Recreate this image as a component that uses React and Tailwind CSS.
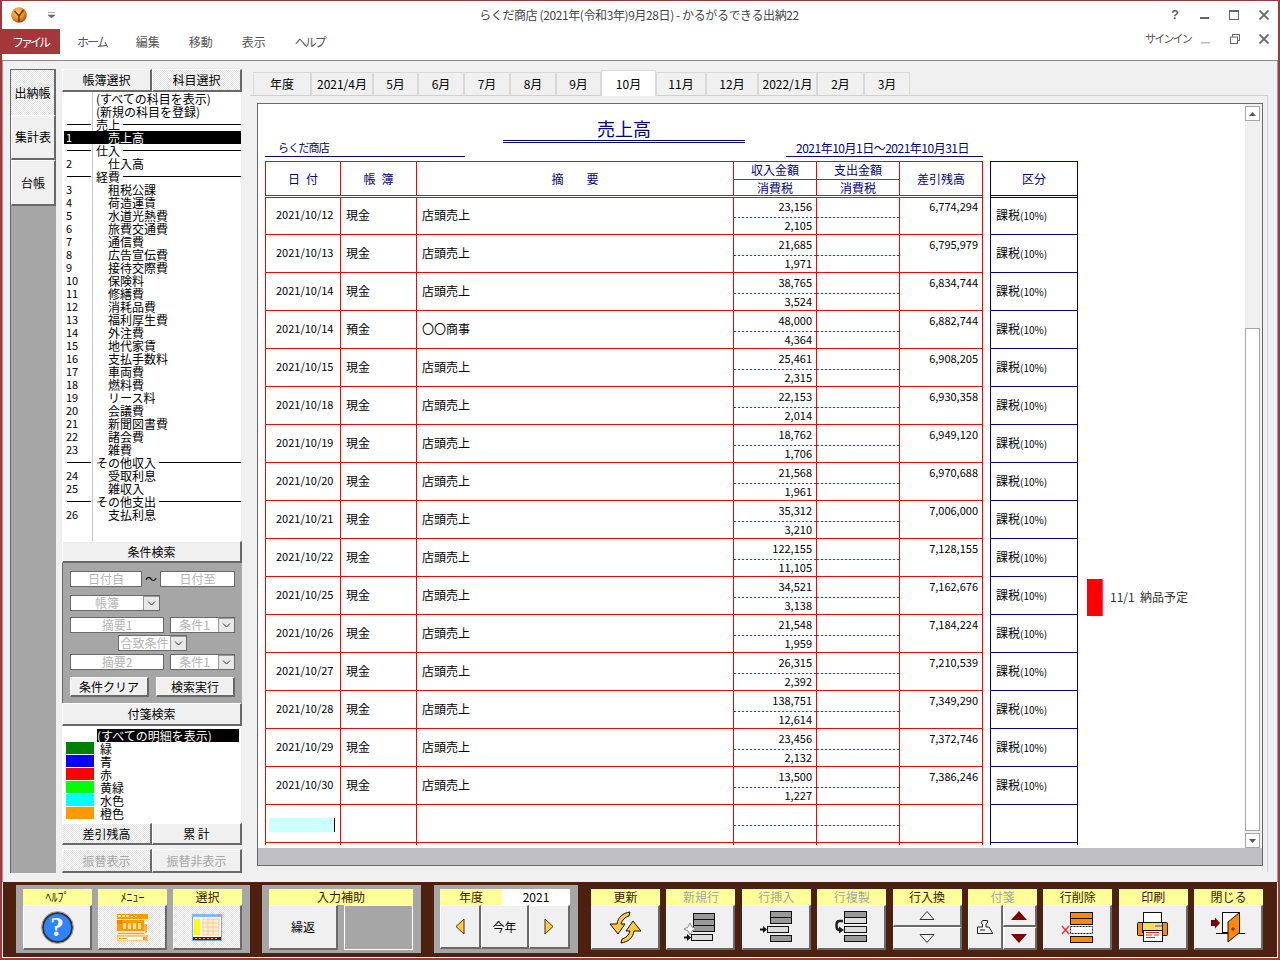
import React from "react";

const bevel =
  "border-t border-l border-t-white border-l-white border-r-2 border-b-2 border-r-[#696969] border-b-[#696969]";
const dither =
  "bg-[image:repeating-conic-gradient(#e2e2e2_0_25%,#ffffff_0_50%)] bg-[length:2px_2px]";

const accounts = [
  { name: "(すべての科目を表示)" },
  { name: "(新規の科目を登録)" },
  { head: "売上" },
  { no: 1, name: "売上高", selected: true },
  { head: "仕入" },
  { no: 2, name: "仕入高" },
  { head: "経費" },
  { no: 3, name: "租税公課" },
  { no: 4, name: "荷造運賃" },
  { no: 5, name: "水道光熱費" },
  { no: 6, name: "旅費交通費" },
  { no: 7, name: "通信費" },
  { no: 8, name: "広告宣伝費" },
  { no: 9, name: "接待交際費" },
  { no: 10, name: "保険料" },
  { no: 11, name: "修繕費" },
  { no: 12, name: "消耗品費" },
  { no: 13, name: "福利厚生費" },
  { no: 14, name: "外注費" },
  { no: 15, name: "地代家賃" },
  { no: 16, name: "支払手数料" },
  { no: 17, name: "車両費" },
  { no: 18, name: "燃料費" },
  { no: 19, name: "リース料" },
  { no: 20, name: "会議費" },
  { no: 21, name: "新聞図書費" },
  { no: 22, name: "諸会費" },
  { no: 23, name: "雑費" },
  { head: "その他収入" },
  { no: 24, name: "受取利息" },
  { no: 25, name: "雑収入" },
  { head: "その他支出" },
  { no: 26, name: "支払利息" },
];

const tags = [
  { name: "緑", color: "bg-[#008000]" },
  { name: "青", color: "bg-[#0000ff]" },
  { name: "赤", color: "bg-[#ff0000]" },
  { name: "黄緑", color: "bg-[#00ff00]" },
  { name: "水色", color: "bg-[#00ffff]" },
  { name: "橙色", color: "bg-[#ff9900]" },
];

const months = [
  { label: "年度", w: "w-[58px]" },
  { label: "2021/4月", w: "w-[62px]" },
  { label: "5月", w: "w-[45px]" },
  { label: "6月", w: "w-[46px]" },
  { label: "7月", w: "w-[46px]" },
  { label: "8月", w: "w-[46px]" },
  { label: "9月", w: "w-[45px]" },
  { label: "10月", w: "w-[55px]", active: true },
  { label: "11月", w: "w-[50px]" },
  { label: "12月", w: "w-[52px]" },
  { label: "2022/1月", w: "w-[59px]" },
  { label: "2月", w: "w-[47px]" },
  { label: "3月", w: "w-[46px]" },
];

const rows = [
  ["2021/10/12", "現金", "店頭売上", "23,156", "2,105", "6,774,294"],
  ["2021/10/13", "現金", "店頭売上", "21,685", "1,971", "6,795,979"],
  ["2021/10/14", "現金", "店頭売上", "38,765", "3,524", "6,834,744"],
  ["2021/10/14", "預金", "〇〇商事", "48,000", "4,364", "6,882,744"],
  ["2021/10/15", "現金", "店頭売上", "25,461", "2,315", "6,908,205"],
  ["2021/10/18", "現金", "店頭売上", "22,153", "2,014", "6,930,358"],
  ["2021/10/19", "現金", "店頭売上", "18,762", "1,706", "6,949,120"],
  ["2021/10/20", "現金", "店頭売上", "21,568", "1,961", "6,970,688"],
  ["2021/10/21", "現金", "店頭売上", "35,312", "3,210", "7,006,000"],
  ["2021/10/22", "現金", "店頭売上", "122,155", "11,105", "7,128,155"],
  ["2021/10/25", "現金", "店頭売上", "34,521", "3,138", "7,162,676", "11/1  納品予定"],
  ["2021/10/26", "現金", "店頭売上", "21,548", "1,959", "7,184,224"],
  ["2021/10/27", "現金", "店頭売上", "26,315", "2,392", "7,210,539"],
  ["2021/10/28", "現金", "店頭売上", "138,751", "12,614", "7,349,290"],
  ["2021/10/29", "現金", "店頭売上", "23,456", "2,132", "7,372,746"],
  ["2021/10/30", "現金", "店頭売上", "13,500", "1,227", "7,386,246"],
];

const Logo = () => (
  <svg width="18" height="18" viewBox="0 0 18 18">
    <defs>
      <radialGradient id="ball" cx="40%" cy="35%" r="70%">
        <stop offset="0%" stopColor="#ffd27a" />
        <stop offset="60%" stopColor="#f08a1c" />
        <stop offset="100%" stopColor="#8a4a12" />
      </radialGradient>
    </defs>
    <circle cx="9" cy="9" r="7.8" fill="url(#ball)" />
    <path d="M4.500 5 9 10l4.500-6M9 10v6" fill="none" stroke="#6b3a10" strokeWidth="1.600" />
  </svg>
);

const HelpIcon = () => (
  <div className="w-[31px] h-[31px] rounded-full bg-[#2f83ff] border-2 border-[#333333] outline outline-1 outline-[#999999] flex items-center justify-center text-white text-[27px] font-bold font-['Liberation_Serif',serif] leading-none">
    ?
  </div>
);

const MenuIcon = () => (
  <svg width="31" height="27" viewBox="0 0 31 27">
    <rect x="0" y="0" width="31" height="5" fill="#ff9a00" />
    <rect x="1" y="1" width="3" height="2" fill="#ffe9a0" />
    <rect x="5" y="1" width="3" height="2" fill="#ffe9a0" />
    <rect x="9" y="1" width="3" height="2" fill="#ffe9a0" />
    <rect x="14" y="2" width="2" height="1" fill="#fff" />
    <rect x="18" y="2" width="2" height="1" fill="#fff" />
    <rect x="0" y="6" width="27" height="11" fill="#ff9a00" />
    <rect x="0" y="6" width="5" height="4" fill="#ff7a00" />
    <rect x="6" y="9" width="3" height="6" fill="#ffe0a0" />
    <rect x="11" y="9" width="3" height="6" fill="#ffe0a0" />
    <rect x="16" y="9" width="3" height="6" fill="#ffe0a0" />
    <rect x="21" y="9" width="3" height="6" fill="#ffe0a0" />
    <rect x="27" y="10" width="3" height="9" fill="#ffb040" />
    <rect x="0" y="17" width="28" height="5" fill="#ffe6c0" />
    <rect x="1" y="19" width="26" height="1" fill="#ff9a00" />
    <rect x="0" y="22" width="31" height="5" fill="#ffffff" stroke="#ff9a00" />
    <rect x="2" y="24" width="8" height="1" fill="#ff9a00" />
    <rect x="26" y="23" width="4" height="3" fill="#ffa020" />
  </svg>
);

const SelectIcon = () => (
  <svg width="30" height="27" viewBox="0 0 30 27">
    <rect x="0.500" y="0.500" width="29" height="26" fill="#ffffff" stroke="#6aaef5" />
    <rect x="0" y="0" width="30" height="3" fill="#7dbbff" />
    <rect x="26" y="0" width="4" height="2" fill="#ff80a0" />
    <rect x="2" y="5" width="6" height="16" fill="#ffff00" stroke="#ffcc80" strokeWidth="0.500" />
    <rect x="11" y="5" width="16" height="16" fill="#fff0d8" stroke="#ffc890" />
    <path d="M11 9h16M11 13h16M11 17h16M16 5v16M21 5v16" stroke="#ffc890" fill="none" />
    <rect x="1" y="23" width="28" height="3" fill="#8a0000" />
    <path d="M3 24.500h2M7 24.500h2M11 24.500h2M15 24.500h2M19 24.500h2M23 24.500h2" stroke="#ffd040" />
  </svg>
);

const SyncIcon = () => {
  const arrow = "M21 1C14 2 9 6 8 13H1l8 10 7-10h-4c1-4 4-7 8-8z";
  return (
    <svg width="33" height="33" viewBox="0 0 33 33">
      <path d={arrow} fill="#ffc938" stroke="#111" />
      <path d={arrow} fill="#ffc938" stroke="#111" transform="rotate(180 16.500 16.500)" />
    </svg>
  );
};

const Side = ({ dir }) => (
  <svg width="10" height="17" viewBox="0 0 10 17">
    <path d={dir === "left" ? "M9 1v15L1 8.500z" : "M1 1v15l8-7.500z"} fill="#ffcc33" stroke="#333" />
  </svg>
);

const arrowRight = "M0 3h3V0.500L7 4 3 7.500V5H0z";

const NewRowIcon = () => (
  <svg width="32" height="29" viewBox="0 0 32 29">
    <rect x="9.500" y="0.500" width="21" height="6" fill="#999" stroke="#111" />
    <rect x="9.500" y="6.500" width="21" height="6" fill="#999" stroke="#111" />
    <rect x="9.500" y="12.500" width="21" height="6" fill="#999" stroke="#111" />
    <path d="M6 10l2 4 4 2-4 2-2 4-2-4-4-2 4-2z" fill="#fff" stroke="#888" />
    <rect x="7.500" y="21.500" width="21" height="6" fill="#ddd" stroke="#111" />
    <path d={arrowRight} transform="translate(0 20.500)" fill="#111" />
  </svg>
);

const InsertIcon = () => (
  <svg width="32" height="32" viewBox="0 0 32 32">
    <rect x="10.500" y="0.500" width="21" height="6" fill="#999" stroke="#111" />
    <rect x="10.500" y="6.500" width="21" height="6" fill="#999" stroke="#111" />
    <rect x="7.500" y="15.500" width="21" height="6" fill="#ddd" stroke="#111" />
    <rect x="10.500" y="24.500" width="21" height="6" fill="#999" stroke="#111" />
    <path d={arrowRight} transform="translate(0 14.500)" fill="#111" />
  </svg>
);

const CopyIcon = () => (
  <svg width="32" height="32" viewBox="0 0 32 32">
    <rect x="9.500" y="0.500" width="22" height="6" fill="#999" stroke="#111" />
    <rect x="9.500" y="6.500" width="22" height="6" fill="#ddd" stroke="#111" />
    <rect x="9.500" y="15.500" width="22" height="6" fill="#ddd" stroke="#111" />
    <rect x="9.500" y="24.500" width="22" height="6" fill="#999" stroke="#111" />
    <path d="M8 10H4.500Q1.500 10 1.500 14v1Q1.500 19 4.500 19H5" fill="none" stroke="#222" strokeWidth="2.500" />
    <path d="M4 15.500 9 19 4 22.500z" fill="#222" />
  </svg>
);

const StampIcon = () => (
  <svg width="16" height="14" viewBox="0 0 16 14">
    <path d="M5.500 0.500h5v2.500l-1.500 1v3h3l3.500 6v0.500H0.500v-6.500h5v-3L4 3z" fill="#f5f5f5" stroke="#222" />
    <path d="M3 10h5" stroke="#222" />
  </svg>
);

const DeleteIcon = () => (
  <svg width="32" height="31" viewBox="0 0 32 31">
    <rect x="9.500" y="0.500" width="22" height="6" fill="#ff8a00" stroke="#111" />
    <rect x="9.500" y="6.500" width="22" height="6" fill="#ff8a00" stroke="#111" />
    <rect x="9.500" y="14.500" width="22" height="7" fill="#fff" stroke="#111" strokeDasharray="2 1" />
    <rect x="9.500" y="24.500" width="22" height="6" fill="#ff8a00" stroke="#111" />
    <path d="M1 14l7 8M8 14l-7 8" stroke="#ff3030" strokeWidth="1.500" />
  </svg>
);

const PrintIcon = () => (
  <svg width="32" height="30" viewBox="0 0 32 30">
    <rect x="6.500" y="0.500" width="18" height="10" fill="#fff" stroke="#111" />
    <rect x="0.500" y="10.500" width="30" height="13" rx="1" fill="#ff8a00" stroke="#111" />
    <rect x="5.500" y="10.500" width="20" height="10" fill="#ffdd55" stroke="#111" />
    <rect x="18" y="13" width="7" height="2" fill="#999" />
    <rect x="6.500" y="18.500" width="19" height="11" fill="#fff" stroke="#111" />
    <path d="M9 20.500h13M9 23h6M17 23h5M9 25.500h9" stroke="#ff2020" strokeWidth="1.200" />
  </svg>
);

const DoorIcon = () => (
  <svg width="34" height="31" viewBox="0 0 34 31">
    <path d="M0 8h4V5.500L9 11l-5 5.500V14H0z" fill="#7a0000" />
    <rect x="11.500" y="0.500" width="17" height="20" fill="#fff" stroke="#111" />
    <path d="M5 21.500h29" stroke="#111" />
    <path d="M17 10 28.500 0.500v20L17 30z" fill="#ff8a00" stroke="#111" />
    <path d="M20 17h4M22 15v4" stroke="#a00000" />
  </svg>
);

const Tri = ({ up }) => (
  <svg width="16" height="9" viewBox="0 0 16 9">
    <path d={up ? "M8 0.500 15 8.500H1z" : "M1 0.500h14L8 8.500z"} fill="#f0f0f0" stroke="#333" />
  </svg>
);

const SolidTri = ({ up }) => (
  <svg width="16" height="9" viewBox="0 0 16 9">
    <path d={up ? "M8 0 16 9H0z" : "M0 0h16L8 9z"} fill="#800000" />
  </svg>
);

const Chevron = () => (
  <svg width="9" height="5" viewBox="0 0 9 5">
    <path d="M1 0.500 4.500 4 8 0.500" fill="none" stroke="#333" />
  </svg>
);

const Label = ({ children, disabled, className = "" }) => (
  <div
    className={`h-[16px] bg-[#ffff99] flex items-center justify-center text-[12px] leading-none ${
      disabled ? "text-[#a6a6a6]" : "text-[#3a1500]"
    } ${className}`}
  >
    {children}
  </div>
);

const ToolButton = ({ label, disabled, dotted, children }) => (
  <div className="w-[69px] shrink-0">
    <Label disabled={disabled}>{label}</Label>
    <div className={`h-[45px] flex items-center justify-center ${bevel} ${dotted ? dither : "bg-[#f0f0f0]"}`}>
      {children}
    </div>
  </div>
);

const SideButton = ({ children, active, disabled, className = "" }) => (
  <div
    className={`flex items-center justify-center text-[12px] ${bevel} ${active ? dither : "bg-[#f0f0f0]"} ${
      disabled ? "text-[#a6a6a6]" : "text-black"
    } ${className}`}
  >
    {children}
  </div>
);

const Field = ({ children, className = "" }) => (
  <div
    className={`h-[16px] border border-[#696969] bg-white text-[#b4b4b4] text-[12px] leading-[14px] text-center whitespace-nowrap ${className}`}
  >
    {children}
  </div>
);

const Combo = ({ children, className = "" }) => (
  <div className={`h-[16px] flex border border-[#696969] bg-white text-[#b4b4b4] text-[12px] leading-[14px] ${className}`}>
    <span className="flex-1 text-center whitespace-nowrap">{children}</span>
    <span className="w-[16px] bg-[#e8e8e8] border-l border-t border-[#999999] flex items-center justify-center">
      <Chevron />
    </span>
  </div>
);

const AccountRow = ({ item }) => {
  if (item.head) {
    return (
      <div className="flex h-[13px] leading-[13px] items-center shrink-0">
        <div className="w-[29px] h-full border-r border-[#c8c8c8] flex items-center">
          <div className="ml-[3px] w-[24px] h-px bg-black" />
        </div>
        <span className="ml-[3px] mr-[3px] whitespace-nowrap">{item.head}</span>
        <div className="flex-1 h-px bg-black" />
      </div>
    );
  }
  return (
    <div className={`flex h-[13px] leading-[13px] shrink-0 ${item.selected ? "bg-black text-white" : ""}`}>
      <div
        className={`w-[29px] pl-[2px] text-[11px] border-r ${
          item.selected ? "border-black" : "border-[#c8c8c8]"
        }`}
      >
        {item.no}
      </div>
      <span className={`whitespace-nowrap ${item.no ? "pl-[15px]" : "pl-[3px]"}`}>{item.name}</span>
    </div>
  );
};

const Dash = () => (
  <div className="h-px shrink-0 bg-[image:repeating-linear-gradient(90deg,#ff0000_0_2px,transparent_2px_4px)]" />
);

const Row = ({ row = [], blank }) => (
  <div className="flex h-[38px] shrink-0">
    <div className="flex w-[718px] border-b border-r border-[#ff0000] text-[12px]">
      <div className={`w-[75px] border-l border-[#ff0000] pl-[10px] flex items-center text-[11px] ${blank ? "pt-[2px]" : "pb-[2px]"}`}>
        {blank ? <div className="-ml-[7px] w-[66px] h-[14px] bg-[#ccffff] border-r border-black" /> : row[0]}
      </div>
      <div className="w-[76px] border-l border-[#ff0000] pl-[5px] pb-[2px] flex items-center">{row[1]}</div>
      <div className="w-[317px] border-l border-[#ff0000] pl-[5px] pb-[2px] flex items-center">{row[2]}</div>
      <div className="w-[83px] border-l border-[#ff0000] flex flex-col text-[11px] text-right">
        <div className="h-[20px] pr-[4px] leading-[18px]">{row[3]}</div>
        <Dash />
        <div className="flex-1 pr-[4px] leading-[14px]">{row[4]}</div>
      </div>
      <div className="w-[83px] border-l border-[#ff0000] flex flex-col">
        <div className="h-[20px]" />
        <Dash />
      </div>
      <div className="flex-1 border-l border-[#ff0000] pr-[4px] text-right text-[11px] leading-[18px]">{row[5]}</div>
    </div>
    <div className="ml-[7px] w-[88px] border-x border-b border-[#000080] pl-[5px] pb-[2px] flex items-center text-[12px] whitespace-nowrap">
      {!blank && (
        <span>
          課税<span className="text-[10px]">(10%)</span>
        </span>
      )}
    </div>
    {row[6] && (
      <div className="ml-[9px] flex items-start">
        <div className="w-[16px] h-[37px] mt-[2px] bg-[#ff0000] border-r border-[#ff3399]" />
        <span className="ml-[7px] mt-[11px] text-[12px] text-[#333333] whitespace-pre">{row[6]}</span>
      </div>
    )}
  </div>
);

const App = () => {
  return (
    <div className="w-[1280px] h-[960px] flex flex-col bg-white border-t border-x-2 border-b-2 border-[#a4373a] overflow-hidden font-['Noto_Sans_CJK_JP','Liberation_Sans',sans-serif] text-black">
      {/* title bar */}
      <div className="h-[28px] shrink-0 flex items-center">
        <div className="ml-[8px]">
          <Logo />
        </div>
        <svg width="7" height="6" viewBox="0 0 7 6" className="ml-[20px]">
          <path d="M0 0.500h7M0 3h7L3.500 6z" fill="#666" stroke="#666" strokeWidth="0.500" />
        </svg>
        <div className="flex-1 ml-[56px] text-center text-[12px] text-[#444444] tracking-[-0.400px] whitespace-nowrap">
          らくだ商店 (2021年(令和3年)9月28日) - かるがるできる出納22
        </div>
        <div className="flex items-center text-[#666666]">
          <span className="w-[16px] text-center text-[13px] font-bold font-['Liberation_Sans',sans-serif]">?</span>
          <svg width="10" height="10" viewBox="0 0 10 10" className="ml-[17px]">
            <rect x="0" y="7" width="9" height="2" fill="#666" />
          </svg>
          <svg width="11" height="10" viewBox="0 0 11 10" className="ml-[19px]">
            <rect x="0.500" y="0.500" width="9" height="9" fill="none" stroke="#666" />
            <rect x="0" y="0" width="10" height="2" fill="#666" />
          </svg>
          <svg width="10" height="10" viewBox="0 0 10 10" className="ml-[19px] mr-[9px]">
            <path d="M0.500 0.500l9 9M9.500 0.500l-9 9" stroke="#666" strokeWidth="1.800" />
          </svg>
        </div>
      </div>

      {/* menu bar */}
      <div className="h-[32px] shrink-0 flex items-start text-[12px] text-[#555555] border-b border-[#8a8a8a]">
        <div className="-ml-[2px] w-[60px] h-[25px] bg-[#a4373a] text-white flex items-center justify-center tracking-[-3px]">ファイル</div>
        <div className="flex items-center h-[25px]">
          <span className="ml-[17px] tracking-[-2px]">ホーム</span>
          <span className="ml-[29px]">編集</span>
          <span className="ml-[29px]">移動</span>
          <span className="ml-[29px]">表示</span>
          <span className="ml-[29px] tracking-[-2px]">ヘルプ</span>
        </div>
        <div className="ml-auto flex items-center h-[19px]">
          <span className="text-[11px] tracking-[-1.800px]">サインイン</span>
          <svg width="10" height="10" viewBox="0 0 10 10" className="ml-[10px]">
            <rect x="0" y="8" width="9" height="1.500" fill="#bbb" />
          </svg>
          <svg width="10" height="10" viewBox="0 0 10 10" className="ml-[19px]">
            <rect x="2.500" y="0.500" width="7" height="6" fill="none" stroke="#666" />
            <rect x="0.500" y="3" width="7" height="6.500" fill="#fff" stroke="#666" />
          </svg>
          <svg width="10" height="10" viewBox="0 0 10 10" className="ml-[19px] mr-[9px]">
            <path d="M0.500 0.500l9 9M9.500 0.500l-9 9" stroke="#666" strokeWidth="1.800" />
          </svg>
        </div>
      </div>

      {/* body */}
      <div className="h-[821px] shrink-0 bg-[#f0f0f0] flex border-l border-r border-[#a0a0a0] pt-[8px] pl-[7px] text-[12px]">
        {/* side tabs */}
        <div className="w-[46px] h-[804px] shrink-0 bg-[#a6a6a6] border-l border-t border-[#696969] flex flex-col">
          <SideButton active className="h-[45px] !border-l-0 !border-t-0 !border-b-0">出納帳</SideButton>
          <SideButton className="h-[45px]">集計表</SideButton>
          <SideButton className="h-[46px]">台帳</SideButton>
        </div>

        {/* left panel */}
        <div className="w-[180px] ml-[6px] shrink-0 flex flex-col">
          <div className="flex h-[23px]">
            <SideButton className="w-[90px]">帳簿選択</SideButton>
            <SideButton active className="w-[90px]">科目選択</SideButton>
          </div>
          <div className="h-[449px] mr-[1px] bg-white pl-[2px] flex flex-col">
            {accounts.map((item, i) => (
              <AccountRow key={i} item={item} />
            ))}
            <div className="flex-1 w-[29px] border-r border-[#c8c8c8]" />
          </div>
          <SideButton className="h-[22px]">条件検索</SideButton>
          <div className="h-[140px] bg-[#a6a6a6] border-l border-[#696969] pl-[7px] pt-[7px] flex flex-col">
            <div className="flex items-center">
              <Field className="w-[72px]">日付自</Field>
              <span className="w-[18px] text-center">〜</span>
              <Field className="w-[75px]">日付至</Field>
            </div>
            <Combo className="w-[90px] mt-[7px]">帳簿</Combo>
            <div className="flex mt-[6px]">
              <Field className="w-[94px]">摘要1</Field>
              <Combo className="w-[65px] ml-[6px]">条件1</Combo>
            </div>
            <Combo className="w-[69px] ml-[48px] mt-[2px]">合致条件</Combo>
            <div className="flex mt-[3px]">
              <Field className="w-[94px]">摘要2</Field>
              <Combo className="w-[65px] ml-[6px]">条件1</Combo>
            </div>
            <div className="flex gap-[7px] mt-[7px]">
              <SideButton className="w-[79px] h-[20px]">条件クリア</SideButton>
              <SideButton className="w-[79px] h-[20px]">検索実行</SideButton>
            </div>
          </div>
          <SideButton className="h-[23px]">付箋検索</SideButton>
          <div className="h-[97px] mr-[1px] bg-white pt-[3px] flex flex-col">
            <div className="ml-[35px] mr-[2px] h-[13px] leading-[13px] bg-black text-white whitespace-nowrap">
              (すべての明細を表示)
            </div>
            {tags.map((t) => (
              <div key={t.name} className="flex h-[13px] leading-[13px]">
                <div className={`ml-[4px] w-[28px] h-[12px] ${t.color}`} />
                <span className="ml-[6px]">{t.name}</span>
              </div>
            ))}
          </div>
          <div className="flex h-[22px]">
            <SideButton active className="w-[90px]">差引残高</SideButton>
            <SideButton className="w-[90px]">累 計</SideButton>
          </div>
          <div className="flex h-[24px] mt-[4px]">
            <SideButton active disabled className="w-[90px]">振替表示</SideButton>
            <SideButton disabled className="w-[90px]">振替非表示</SideButton>
          </div>
        </div>

        {/* right area */}
        <div className="ml-[8px] w-[1018px] shrink-0 flex flex-col">
          <div className="flex h-[26px] pl-[3px] items-end">
            {months.map((m) => (
              <div
                key={m.label}
                className={`${m.w} flex items-center justify-center border-t border-x border-[#d9d9d9] ${
                  m.active ? "h-[26px] bg-white relative top-px" : "h-[23px]"
                }`}
              >
                {m.label}
              </div>
            ))}
          </div>
          <div className="h-[777px] border-t border-r border-[#d0d0d0] pl-[7px] pr-[4px] pt-[7px]">
            <div className="h-[763px] border border-[#696969] bg-white flex flex-col">
              <div className="flex-1 flex min-h-0">
                <div className="flex-1 min-w-0 pl-[7px] overflow-hidden flex flex-col text-[#000080]">
                  <div className="h-[57px] shrink-0 flex items-end">
                    <div className="w-[200px] h-[17px] mb-[4px] border-b border-[#000080] pl-[13px] leading-[15px] text-[11px] tracking-[-0.800px]">
                      らくだ商店
                    </div>
                    <div className="w-[242px] ml-[38px] mb-[18px] border-b-[3px] border-double border-[#000080] text-center text-[18px] leading-[24px]">
                      売上高
                    </div>
                    <div className="w-[197px] ml-[41px] h-[17px] mb-[4px] pr-[4px] border-b border-[#000080] text-center leading-[15px] text-[12px] tracking-[-0.500px] whitespace-nowrap">
                      2021年10月1日〜2021年10月31日
                    </div>
                  </div>
                  {/* header */}
                  <div className="flex h-[37px] shrink-0">
                    <div className="flex w-[718px] border-t border-r border-b-[3px] border-[#ff0000] [border-bottom-style:double]">
                      <div className="w-[75px] border-l border-[#ff0000] flex items-center justify-center gap-[6px]">
                        <span>日</span>
                        <span>付</span>
                      </div>
                      <div className="w-[76px] border-l border-[#ff0000] flex items-center justify-center gap-[6px]">
                        <span>帳</span>
                        <span>簿</span>
                      </div>
                      <div className="w-[317px] border-l border-[#ff0000] flex items-center justify-center gap-[23px]">
                        <span>摘</span>
                        <span>要</span>
                      </div>
                      <div className="w-[83px] border-l border-[#ff0000] flex flex-col text-center">
                        <div className="h-[19px] border-b border-[#ff0000] leading-[16px]">収入金額</div>
                        <div className="flex-1 leading-[15px]">消費税</div>
                      </div>
                      <div className="w-[83px] border-l border-[#ff0000] flex flex-col text-center">
                        <div className="h-[19px] border-b border-[#ff0000] leading-[16px]">支出金額</div>
                        <div className="flex-1 leading-[15px]">消費税</div>
                      </div>
                      <div className="flex-1 border-l border-[#ff0000] flex items-center justify-center">差引残高</div>
                    </div>
                    <div className="ml-[7px] w-[88px] border-t border-x border-b-[3px] border-[#000080] [border-bottom-style:double] flex items-center justify-center">
                      区分
                    </div>
                  </div>
                  {/* rows */}
                  <div className="-mt-px flex flex-col text-black">
                    {rows.map((row, i) => (
                      <Row key={i} row={row} />
                    ))}
                    <Row blank />
                    <div className="flex h-[2px] shrink-0">
                      <div className="flex w-[718px] border-r border-[#ff0000]">
                        <div className="w-[75px] border-l border-[#ff0000]" />
                        <div className="w-[76px] border-l border-[#ff0000]" />
                        <div className="w-[317px] border-l border-[#ff0000]" />
                        <div className="w-[83px] border-l border-[#ff0000]" />
                        <div className="w-[83px] border-l border-[#ff0000]" />
                        <div className="flex-1 border-l border-[#ff0000]" />
                      </div>
                      <div className="ml-[7px] w-[88px] border-x border-[#000080]" />
                    </div>
                  </div>
                </div>
                {/* scrollbar */}
                <div className="w-[17px] shrink-0 bg-[#f0f0f0] flex flex-col">
                  <div className="h-[15px] w-[15px] mt-[2px] bg-white border border-[#a6a6a6] flex items-center justify-center">
                    <svg width="7" height="4" viewBox="0 0 7 4">
                      <path d="M3.500 0 7 4H0z" fill="#555" />
                    </svg>
                  </div>
                  <div className="h-[207px]" />
                  <div className="flex-1 w-[15px] bg-white border border-[#a6a6a6]" />
                  <div className="h-[15px] w-[15px] mt-[2px] bg-white border border-[#a6a6a6] flex items-center justify-center">
                    <svg width="7" height="4" viewBox="0 0 7 4">
                      <path d="M0 0h7L3.500 4z" fill="#555" />
                    </svg>
                  </div>
                </div>
              </div>
              <div className="h-[17px] shrink-0 bg-[#c0c0c4]" />
            </div>
          </div>
        </div>
      </div>

      {/* toolbar */}
      <div className="flex-1 bg-[#4d2010] mx-px flex items-start pt-[3px] pl-[13px]">
        <div className="h-[68px] bg-[#a6a6a6] pl-[7px] pr-[8px] pt-[4px] flex gap-[6px]">
          <ToolButton label="ﾍﾙﾌﾟ">
            <HelpIcon />
          </ToolButton>
          <ToolButton label="ﾒﾆｭｰ" dotted>
            <MenuIcon />
          </ToolButton>
          <ToolButton label="選択" dotted>
            <SelectIcon />
          </ToolButton>
        </div>

        <div className="h-[68px] ml-[12px] bg-[#a6a6a6] pl-[7px] pr-[8px] pt-[4px]">
          <Label className="w-[144px]">入力補助</Label>
          <div className="flex">
            <div className={`w-[69px] h-[45px] flex items-center justify-center bg-[#f0f0f0] text-[12px] ${bevel}`}>繰返</div>
            <div className="w-[69px] h-[45px] ml-[6px] border border-white" />
          </div>
        </div>

        <div className="h-[68px] w-[144px] ml-[13px] bg-[#a6a6a6] px-[6px] pt-[4px]">
          <div className="w-[130px]">
            <div className="flex">
              <Label className="w-[62px]">年度</Label>
              <div className="flex-1 bg-white text-center text-[12px] leading-[16px]">2021</div>
            </div>
            <div className="flex h-[44px] text-[12px]">
              <div className={`w-[41px] flex items-center justify-center bg-[#f0f0f0] ${bevel}`}>
                <Side dir="left" />
              </div>
              <div className={`w-[48px] flex items-center justify-center bg-[#f0f0f0] ${bevel}`}>今年</div>
              <div className={`w-[41px] flex items-center justify-center bg-[#f0f0f0] ${bevel}`}>
                <Side dir="right" />
              </div>
            </div>
          </div>
        </div>

        <div className="ml-[13px] pt-[4px] flex gap-[6.400px]">
          <ToolButton label="更新">
            <SyncIcon />
          </ToolButton>
          <ToolButton label="新規行" disabled>
            <NewRowIcon />
          </ToolButton>
          <ToolButton label="行挿入" disabled>
            <InsertIcon />
          </ToolButton>
          <ToolButton label="行複製" disabled>
            <CopyIcon />
          </ToolButton>
          <div className="w-[69px] shrink-0">
            <Label>行入換</Label>
            <div className="h-[45px] flex flex-col">
              <div className={`h-[22px] flex items-center justify-center bg-[#f0f0f0] ${bevel}`}>
                <Tri up />
              </div>
              <div className={`h-[23px] flex items-center justify-center bg-[#f0f0f0] ${bevel}`}>
                <Tri />
              </div>
            </div>
          </div>
          <div className="w-[69px] shrink-0">
            <Label disabled>付箋</Label>
            <div className="h-[45px] flex">
              <div className={`w-[35px] flex items-center justify-center bg-[#f0f0f0] ${bevel}`}>
                <StampIcon />
              </div>
              <div className="w-[34px] flex flex-col">
                <div className={`h-[22px] flex items-center justify-center bg-[#f0f0f0] ${bevel}`}>
                  <SolidTri up />
                </div>
                <div className={`h-[23px] flex items-center justify-center bg-[#f0f0f0] ${bevel}`}>
                  <SolidTri />
                </div>
              </div>
            </div>
          </div>
          <ToolButton label="行削除">
            <DeleteIcon />
          </ToolButton>
          <ToolButton label="印刷">
            <PrintIcon />
          </ToolButton>
          <ToolButton label="閉じる">
            <DoorIcon />
          </ToolButton>
        </div>
      </div>
      <div className="h-px shrink-0 bg-white" />
    </div>
  );
};

export default App;
